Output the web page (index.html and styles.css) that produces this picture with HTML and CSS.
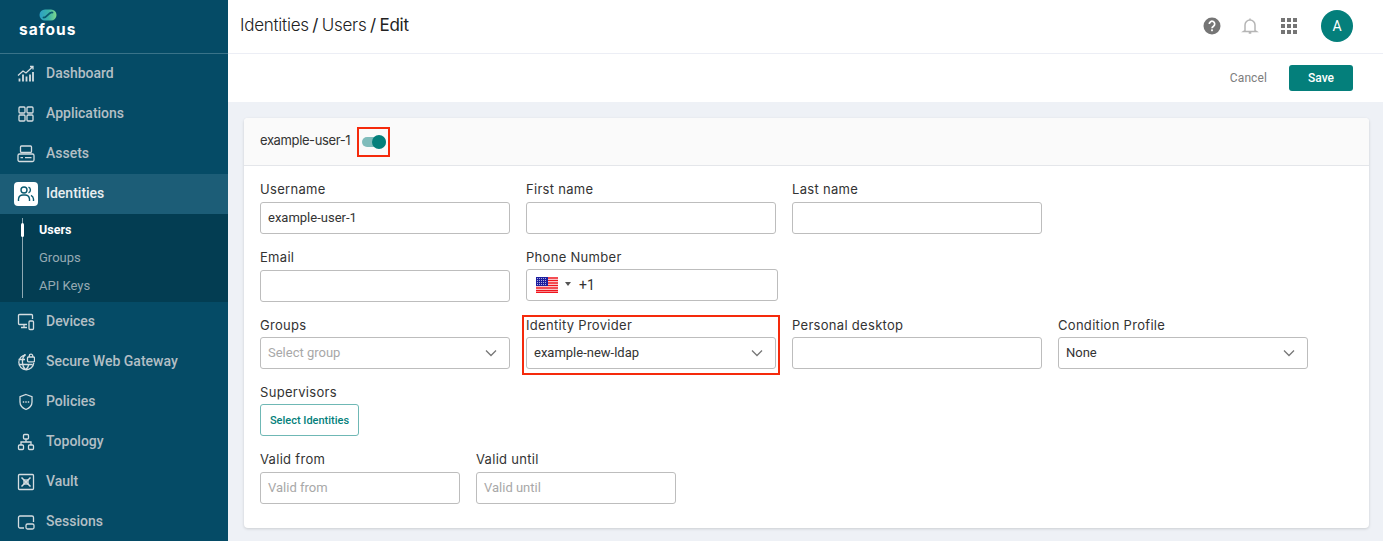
FILE: index.html
```html
<!DOCTYPE html>
<html lang="en">
<head>
<meta charset="utf-8">
<title>Edit user</title>
<link rel="stylesheet" href="styles.css">
</head>
<body>
<div class="app">
  <aside class="sidebar">
    <div class="brand">
      <svg class="brand-mark" width="18" height="12" viewBox="0 0 18 12"><defs><linearGradient id="lg" x1="0" x2="1" y1="0" y2="0"><stop offset="0" stop-color="#2b9fc4"/><stop offset=".55" stop-color="#3cb5a8"/><stop offset="1" stop-color="#7fd98c"/></linearGradient></defs><rect x=".5" y=".5" width="17" height="11" rx="5.500" fill="url(#lg)"/><path d="M4.500 8.500C7 9.500 10 2.500 13.500 3.500" fill="none" stroke="#0a5a70" stroke-width="1.800" stroke-linecap="round"/></svg>
      <span class="brand-name">safous</span>
    </div>
    <nav class="nav">
      <a class="nav-item"><span class="nav-icon"><svg width="18" height="18" viewBox="0 0 18 18"><path d="M1 10.500l5-4.500 3 2 7-6.500M13 1.500h3v3" fill="none" stroke="currentColor" stroke-width="1.300"/><path d="M2.500 16.500v-3M6 16.500v-7M9.500 16.500v-5M13 16.500v-7M16 16.500V7" fill="none" stroke="currentColor" stroke-width="1.800"/></svg></span><span class="nav-text">Dashboard</span></a>
      <a class="nav-item"><span class="nav-icon"><svg width="18" height="18" viewBox="0 0 18 18"><g fill="none" stroke="currentColor" stroke-width="1.300"><rect x="2" y="2" width="6" height="6" rx="1"/><rect x="10" y="2" width="6" height="6" rx="1"/><rect x="2" y="10" width="6" height="6" rx="1"/><rect x="10" y="10" width="6" height="6" rx="1"/></g></svg></span><span class="nav-text">Applications</span></a>
      <a class="nav-item"><span class="nav-icon"><svg width="18" height="18" viewBox="0 0 18 18"><g fill="none" stroke="currentColor" stroke-width="1.300"><rect x="3.500" y="1" width="11" height="6.500" rx="1"/><rect x="1" y="9" width="16" height="7.500" rx="1.500"/><path d="M3.500 12.700h2.500M8 12.700h6.500"/></g></svg></span><span class="nav-text">Assets</span></a>
      <a class="nav-item nav-active"><span class="nav-icon nav-icon-active"><svg width="18" height="18" viewBox="0 0 18 18"><g fill="none" stroke="#0a5a70" stroke-width="1.400"><circle cx="7" cy="5" r="3"/><path d="M1.500 16v-2a4.500 4.500 0 0 1 4.500-4h2a4.500 4.500 0 0 1 4.500 4v2M11.500 2.200a3 3 0 0 1 0 5.600M14 10.300a4.500 4.500 0 0 1 2.500 3.700v2"/></g></svg></span><span class="nav-text">Identities</span></a>
      <div class="subnav">
        <a class="sub-item sub-active">Users</a>
        <a class="sub-item">Groups</a>
        <a class="sub-item">API Keys</a>
      </div>
      <a class="nav-item"><span class="nav-icon"><svg width="18" height="18" viewBox="0 0 18 18"><g fill="none" stroke="currentColor" stroke-width="1.300"><path d="M10 11.500H2.500a1 1 0 0 1-1-1V2.500a1 1 0 0 1 1-1h12a1 1 0 0 1 1 1V6M4 14.500h6M7 11.500v3"/><rect x="12" y="8" width="4.500" height="8.500" rx="1"/></g></svg></span><span class="nav-text">Devices</span></a>
      <a class="nav-item"><span class="nav-icon"><svg width="18" height="18" viewBox="0 0 18 18"><g fill="none" stroke="currentColor" stroke-width="1.300"><path d="M9 1.800a7.500 7.500 0 1 0 7.800 8M8 1.800C4.500 5 4.500 13 8.500 16.800M8.500 16.800c1.700-1.300 3-3.300 3.500-5.800M1.500 6.500h6.500M1.500 11.500h14"/><rect x="10.500" y="4" width="7" height="4.800" rx="1"/><path d="M12.300 4V2.800a1.700 1.700 0 0 1 3.400 0V4"/></g></svg></span><span class="nav-text">Secure Web Gateway</span></a>
      <a class="nav-item"><span class="nav-icon"><svg width="18" height="18" viewBox="0 0 18 18"><path d="M9 1.500l6 2.200v5.300c0 4-3 6.300-6 7.500-3-1.200-6-3.500-6-7.500V3.700z" fill="none" stroke="currentColor" stroke-width="1.300"/><path d="M5.800 9h1.400M8.300 9h1.400M10.800 9h1.400" stroke="currentColor" stroke-width="1.300"/></svg></span><span class="nav-text">Policies</span></a>
      <a class="nav-item"><span class="nav-icon"><svg width="18" height="18" viewBox="0 0 18 18"><g fill="none" stroke="currentColor" stroke-width="1.300"><rect x="6.500" y="1.500" width="5" height="4.500" rx="1"/><rect x="1.500" y="12" width="5" height="4.500" rx="1"/><rect x="11.500" y="12" width="5" height="4.500" rx="1"/><path d="M9 6v3M4 12V9h10v3"/></g></svg></span><span class="nav-text">Topology</span></a>
      <a class="nav-item"><span class="nav-icon"><svg width="18" height="18" viewBox="0 0 18 18"><g fill="none" stroke="currentColor" stroke-width="1.300"><rect x="1.500" y="1.500" width="15" height="15" rx="1"/><path d="M4.500 4.500l9 9M13.500 4.500l-9 9" stroke-width="1.500"/><rect x="7" y="7" width="4" height="4"/></g></svg></span><span class="nav-text">Vault</span></a>
      <a class="nav-item"><span class="nav-icon"><svg width="18" height="18" viewBox="0 0 18 18"><g fill="none" stroke="currentColor" stroke-width="1.300"><path d="M7 15H3a1.500 1.500 0 0 1-1.500-1.500v-9A1.500 1.500 0 0 1 3 3h12a1.500 1.500 0 0 1 1.500 1.500V9"/><rect x="9" y="11" width="8" height="5" rx="1.500"/></g></svg></span><span class="nav-text">Sessions</span></a>
    </nav>
  </aside>
  <main class="main">
    <header class="topbar">
      <h1 class="crumbs"><span class="crumb">Identities</span> / <span class="crumb">Users</span> / <span class="crumb-now">Edit</span></h1>
      <div class="top-icons">
        <svg width="20" height="20" viewBox="0 0 20 20"><circle cx="10" cy="10" r="8.500" fill="#757575"/><path d="M7.300 8a2.700 2.700 0 1 1 4.200 2.200c-1 .7-1.500 1.100-1.500 2.100" fill="none" stroke="#fff" stroke-width="1.700"/><rect x="9.100" y="13.400" width="1.800" height="1.800" fill="#fff"/></svg>
        <svg class="bell" width="20" height="20" viewBox="0 0 20 20"><path d="M5 14.500V9a5 5 0 0 1 10 0v5.500l1.500 1h-13zM10 2.500V4M8.700 17h2.600" fill="none" stroke="#b5b5b5" stroke-width="1.500"/></svg>
        <svg class="apps" width="18" height="18" viewBox="0 0 18 18" fill="#757575"><rect x="1" y="1" width="4" height="4"/><rect x="7" y="1" width="4" height="4"/><rect x="13" y="1" width="4" height="4"/><rect x="1" y="7" width="4" height="4"/><rect x="7" y="7" width="4" height="4"/><rect x="13" y="7" width="4" height="4"/><rect x="1" y="13" width="4" height="4"/><rect x="7" y="13" width="4" height="4"/><rect x="13" y="13" width="4" height="4"/></svg>
        <span class="avatar">A</span>
      </div>
    </header>
    <div class="actions">
      <button class="btn-cancel" type="button">Cancel</button>
      <button class="btn-save" type="button">Save</button>
    </div>
    <div class="content">
      <section class="card">
        <div class="card-head">
          <span class="card-title">example-user-1</span>
          <span class="toggle-mark"><span class="toggle"><span class="toggle-knob"></span></span></span>
        </div>
        <div class="card-body">
          <div class="row">
            <div class="field"><label class="label">Username</label><div class="input">example-user-1</div></div>
            <div class="field"><label class="label">First name</label><div class="input"></div></div>
            <div class="field"><label class="label">Last name</label><div class="input"></div></div>
          </div>
          <div class="row">
            <div class="field"><label class="label">Email</label><div class="input"></div></div>
            <div class="field field-phone"><label class="label">Phone Number</label>
              <div class="input phone">
                <svg class="flag" width="22" height="16" viewBox="0 0 22 16"><rect width="22" height="16" fill="#fff"/><path d="M0 1h22M0 3.500h22M0 6h22M0 8.500h22M0 11h22M0 13.500h22M0 15.500h22" stroke="#f0141c" stroke-width="1.300"/><rect width="12" height="9" fill="#1d1f9f"/><path d="M1 1.500h10M1 3.500h10M1 5.500h10M1 7.500h10" stroke="#d0d0f0" stroke-width=".8" stroke-dasharray="1 1"/></svg>
                <span class="caret"></span>
                <span>+1</span>
              </div>
            </div>
          </div>
          <div class="row">
            <div class="field"><label class="label">Groups</label><div class="input select placeholder">Select group<svg class="chev" width="12" height="8" viewBox="0 0 12 8"><path d="M1 1.500l5 5 5-5" fill="none" stroke="#777" stroke-width="1.300"/></svg></div></div>
            <div class="field field-marked"><label class="label">Identity Provider</label><div class="input select">example-new-ldap<svg class="chev" width="12" height="8" viewBox="0 0 12 8"><path d="M1 1.500l5 5 5-5" fill="none" stroke="#777" stroke-width="1.300"/></svg></div></div>
            <div class="field"><label class="label">Personal desktop</label><div class="input"></div></div>
            <div class="field"><label class="label">Condition Profile</label><div class="input select">None<svg class="chev" width="12" height="8" viewBox="0 0 12 8"><path d="M1 1.500l5 5 5-5" fill="none" stroke="#777" stroke-width="1.300"/></svg></div></div>
          </div>
          <div class="row">
            <div class="field"><label class="label">Supervisors</label><button class="btn-outline" type="button">Select Identities</button></div>
          </div>
          <div class="row row-dates">
            <div class="field field-date"><label class="label">Valid from</label><div class="input placeholder">Valid from</div></div>
            <div class="field field-date"><label class="label">Valid until</label><div class="input placeholder">Valid until</div></div>
          </div>
        </div>
      </section>
    </div>
  </main>
</div>
</body>
</html>
```

FILE: styles.css
```css
* { box-sizing: border-box; }
html, body { margin: 0; height: 541px; overflow: hidden; }
body { font-family: Roboto, "Liberation Sans", sans-serif; color: #333; background: #fff; }
.app { display: flex; height: 541px; }

.sidebar { width: 228px; flex: none; background: #054b66; overflow: hidden; }
.brand { height: 54px; border-bottom: 1px solid #3a7389; display: flex; flex-direction: column; align-items: flex-start; padding: 9px 0 0 19px; }
.brand-mark { margin-left: 20px; display: block; }
.brand-name { font-family: Inter, sans-serif; font-weight: 700; font-size: 15.500px; line-height: 15px; letter-spacing: 1px; color: #fff; margin-top: 1px; }
.nav { display: flex; flex-direction: column; }
.nav-item { height: 40px; display: flex; align-items: center; gap: 8px; padding-left: 14px; font-size: 14px; font-weight: 500; color: #b3bfc5; }
.nav-text { margin-top: -2px; }
.nav-icon { width: 24px; height: 24px; display: flex; align-items: center; justify-content: center; color: #d5dde1; }
.nav-active { background: #1c5d77; color: #e8eef0; }
.nav-icon-active { background: #fff; border-radius: 4px; }
.subnav { background: #033d52; height: 88px; position: relative; }
.subnav::before { content: ""; position: absolute; left: 22px; top: 4px; bottom: 4px; width: 1px; background: #8fa9b3; }
.sub-item { display: flex; align-items: center; height: 28px; padding: 2px 0 0 39px; font-size: 13px; color: #96aab3; position: relative; }
.sub-active { color: #fff; font-weight: 700; font-size: 12.500px; }
.sub-active::before { content: ""; position: absolute; left: 21px; top: 9px; width: 3px; height: 14px; background: #fff; border-radius: 2px; }

.main { flex: 1; min-width: 0; display: flex; flex-direction: column; }
.topbar { height: 54px; flex: none; display: flex; align-items: center; justify-content: space-between; padding: 0 30px 4px 12px; border-bottom: 1px solid #eceef5; }
.crumbs { margin: 0; font-family: Inter, sans-serif; font-size: 17px; font-weight: 400; color: #222; letter-spacing: -.25px; word-spacing: -1px; }
.crumb { font-weight: 300; }
.top-icons { display: flex; align-items: center; }
.top-icons svg { display: block; margin-top: 2px; }
.bell { margin-left: 18px; }
.apps { margin-left: 20px; }
.avatar { margin-left: 23px; width: 32px; height: 32px; border-radius: 50%; background: #047f7b; color: #fff; font-size: 14px; display: flex; align-items: center; justify-content: center; margin-top: 2px; }

.actions { height: 48px; flex: none; display: flex; align-items: center; justify-content: flex-end; padding: 0 30px 0 0; }
.btn-cancel { border: 0; background: none; font: 400 12px Roboto, sans-serif; letter-spacing: .1px; color: #7d7d7d; padding: 0; margin-right: 22px; }
.btn-save { width: 64px; height: 26px; border: 0; border-radius: 3px; background: #047f7b; color: #fff; font: 500 12px Roboto, sans-serif; }

.content { flex: 1; background: #eef1f6; padding: 16px 14px 0 16px; min-height: 0; }
.card { height: 410px; background: #fff; border-radius: 4px; box-shadow: 0 1px 3px rgba(0,0,0,.15); overflow: hidden; }
.card-head { height: 48px; background: #fafafa; border-bottom: 1px solid #e4e6ea; display: flex; align-items: center; gap: 7px; padding: 0 16px; }
.card-title { font-family: Inter, sans-serif; font-size: 13px; color: #333; letter-spacing: -.38px; margin-bottom: 3px; }
.toggle-mark { width: 33px; height: 30px; border: 2px solid #f52a0c; display: flex; align-items: center; justify-content: center; }
.toggle { width: 24px; height: 10px; border-radius: 5px; background: #7fbcbb; position: relative; display: block; }
.toggle-knob { position: absolute; right: 0; top: -2px; width: 14px; height: 14px; border-radius: 50%; background: #047f7b; }

.card-body { padding: 16.400px 16px 0; display: flex; flex-direction: column; gap: 16px; }
.row { display: flex; gap: 16px; }
.row-dates { margin-top: -.5px; }
.field { width: 250px; display: flex; flex-direction: column; align-items: flex-start; position: relative; }
.field-phone { width: 252px; }
.field-date { width: 200px; }
.label { font-family: Inter, sans-serif; font-size: 13px; height: 19.600px; line-height: 15.600px; color: #333; letter-spacing: .3px; }
.input { width: 100%; height: 32px; border: 1px solid #bdbdbd; border-radius: 3px; background: #fff; display: flex; align-items: center; padding: 0 7px; font-size: 13px; color: #333; }
.placeholder { color: #a8a8a8; padding-bottom: 1px; }
.select { justify-content: space-between; padding: 0 12px 1px 7px; }
.chev { display: block; }
.phone { padding-left: 9px; font-size: 14px; margin-top: -1px; margin-bottom: 1px; }
.flag { display: block; }
.caret { width: 0; height: 0; border-left: 3px solid transparent; border-right: 3px solid transparent; border-top: 4px solid #555; margin: 0 8px 2px 7px; }
.field-marked::after { content: ""; position: absolute; left: -4px; right: -4px; top: -3px; bottom: -6px; border: 2px solid #f52a0c; pointer-events: none; }
.btn-outline { width: 99px; height: 32px; border: 1px solid #6fb8b5; border-radius: 3px; background: #fff; color: #047f7b; font: 500 11px Roboto, sans-serif; padding: 1px 0 0; margin: -1px 0 1px; }
```
